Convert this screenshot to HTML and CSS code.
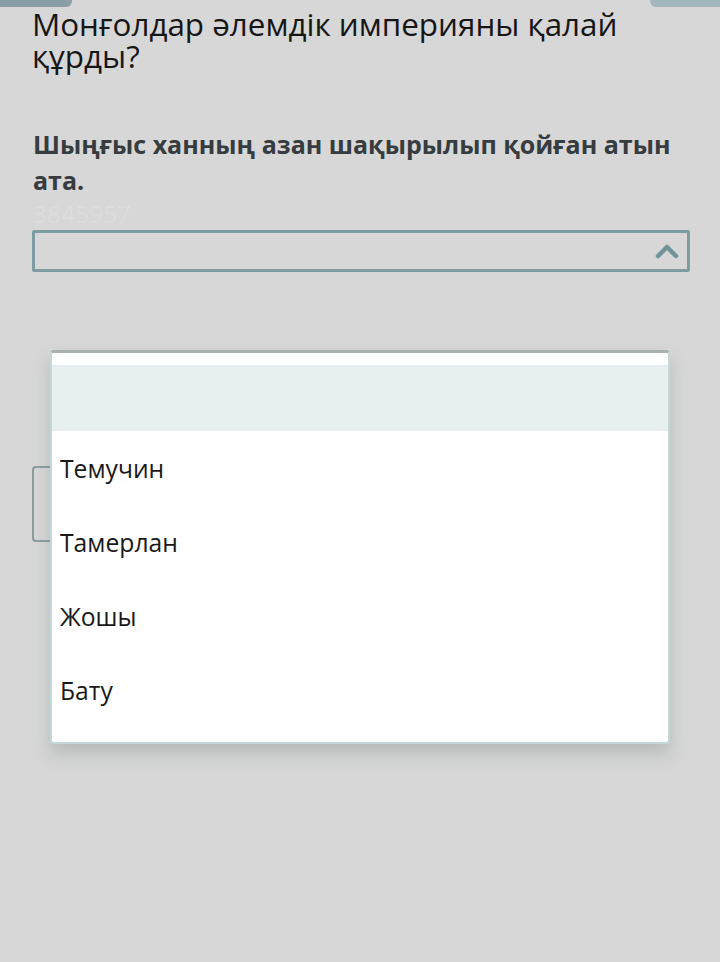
FILE: index.html
```html
<!DOCTYPE html>
<html lang="kk">
<head>
<meta charset="utf-8">
<title>Сұрақ</title>
<link rel="stylesheet" href="styles.css">
</head>
<body>
<div class="topbars">
  <div class="tab tab-left"></div>
  <div class="tab tab-right"></div>
</div>
<main class="page">
  <h1 class="title">Монғолдар әлемдік империяны қалай құрды?</h1>
  <p class="question">Шыңғыс ханның азан шақырылып қойған атын ата.</p>
  <div class="code">3845957</div>
  <div class="select">
    <svg class="chev" width="24" height="16" viewBox="0 0 24 16"><path d="M3 13 L12 4 L21 13" fill="none" stroke="#6f959a" stroke-width="4.5" stroke-linecap="round" stroke-linejoin="round"/></svg>
  </div>
  <div class="below">
    <div class="ghost-field"></div>
    <div class="menu">
      <div class="opt opt-blank"></div>
      <div class="opt">Темучин</div>
      <div class="opt">Тамерлан</div>
      <div class="opt">Жошы</div>
      <div class="opt">Бату</div>
    </div>
  </div>
</main>
</body>
</html>
```
FILE: styles.css
```css
html, body {
  margin: 0;
  padding: 0;
}
body {
  background: #d6d7d6;
  font-family: "Open Sans", "Noto Sans", sans-serif;
  width: 720px;
  height: 962px;
  overflow: hidden;
}
.topbars {
  display: flex;
  justify-content: space-between;
  height: 7px;
}
.tab {
  height: 7px;
}
.tab-left {
  width: 72px;
  background: #8a9ea7;
  border-bottom-right-radius: 6px;
}
.tab-right {
  width: 70px;
  background: #a2b6be;
  border-bottom-left-radius: 6px;
}
.page {
  padding: 0 30px 0 32px;
}
.title {
  margin: 0;
  font-weight: 400;
  font-size: 31.4px;
  line-height: 32px;
  color: #161616;
  padding-top: 1px;
  padding-right: 40px;
}
.question {
  margin: 54px 0 0 1px;
  font-weight: 700;
  font-size: 25px;
  line-height: 36px;
  color: #363c40;
}
.code {
  margin: 0 0 0 1px;
  font-size: 24.5px;
  line-height: 32px;
  color: #dcdddc;
  height: 32px;
}
.select {
  margin-top: 0;
  height: 36px;
  border: 3px solid #7e9da2;
  border-radius: 2px;
  display: flex;
  align-items: center;
  justify-content: flex-end;
  padding-right: 8px;
}
.chev {
  display: block;
}
.below {
  position: relative;
  height: 480px;
}
.ghost-field {
  position: absolute;
  left: 0;
  top: 194px;
  width: 40px;
  height: 72px;
  border: 2px solid #8e9c9e;
  border-right: none;
  border-radius: 4px 0 0 4px;
}
.menu {
  position: absolute;
  left: 18px;
  top: 78px;
  width: 616px;
  background: #ffffff;
  border: 2px solid #c5d8d8;
  border-top: 3px solid #a9b1b1;
  border-radius: 4px;
  padding-top: 12px;
  padding-bottom: 15px;
  box-shadow: 0 10px 16px rgba(120, 135, 135, 0.35);
}
.opt {
  height: 74px;
  display: flex;
  align-items: center;
  padding-left: 8px;
  font-size: 24.7px;
  color: #1a1a1a;
}
.opt-blank {
  height: 66px;
  background: #e8eff0;
}
```
